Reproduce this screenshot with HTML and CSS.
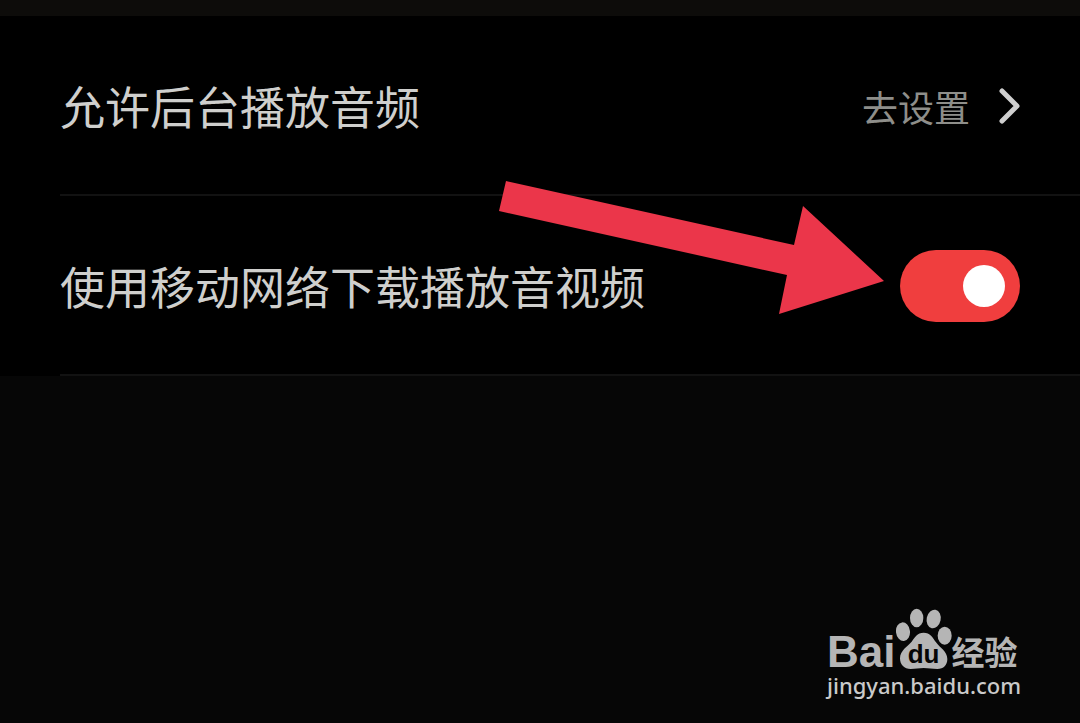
FILE: index.html
```
<!DOCTYPE html>
<html lang="zh-CN">
<head>
  <meta charset="UTF-8">
  <title>播放设置</title>
  <link rel="stylesheet" href="styles.css">
</head>
<body>

  <div class="settings">
    <div class="row">
      <span class="row-title">允许后台播放音频</span>
      <a class="row-link" href="#">
        去设置
        <svg class="chevron" width="22" height="36" viewBox="0 0 22 36" aria-hidden="true">
          <path d="M4 3L19 18L4 33" />
        </svg>
      </a>
    </div>

    <div class="row">
      <label class="row-title" for="mobile-data">使用移动网络下载播放音视频</label>
      <input class="switch" type="checkbox" id="mobile-data" checked>
    </div>
  </div>

  <svg class="arrow" width="386" height="136" viewBox="0 0 386 136" aria-hidden="true">
    <path d="M7 1L295 65L304 26L385 101L280 134L288 95L0 31Z" />
  </svg>

  <div class="watermark">
    <div class="logo">
      <span class="logo-bai">Bai</span>
      <span class="logo-paw">
        <svg width="56" height="62" viewBox="254 54 168 186" aria-hidden="true">
          <ellipse cx="275" cy="125" rx="21" ry="28" transform="rotate(-6 275 125)" />
          <ellipse cx="316" cy="84" rx="20" ry="28" />
          <ellipse cx="367" cy="87" rx="21" ry="28" transform="rotate(12 367 87)" />
          <ellipse cx="400" cy="137" rx="21" ry="27" />
          <path d="M337 128C318 128 309 143 301 155C291 168 266 180 266 205C266 225 279 237 298 237C313 237 322 234 337 234C352 234 362 237 378 237C397 237 408 225 408 207C408 184 386 174 374 157C365 143 356 128 337 128Z" />
        </svg>
        <span class="logo-du">du</span>
      </span>
      <span class="logo-name">经验</span>
    </div>
    <div class="site">jingyan.baidu.com</div>
  </div>

</body>
</html>
```
FILE: styles.css
```
body {
  margin: 0;
  min-height: 100vh;
  position: relative;
  overflow: hidden;
  background-color: #060606;
  color: #cfcfcd;
  font-family: "Noto Sans CJK SC", sans-serif;
}
.settings {
  border-top: 16px solid #0d0c0a;
  background-color: #000;
}
.row {
  display: flex;
  align-items: center;
  justify-content: space-between;
  box-sizing: border-box;
  height: 180px;
  margin-left: 60px;
  padding-top: 2px;
  padding-right: 60px;
  border-bottom: 2px solid #121212;
}
.row-title {
  font-size: 45px;
  line-height: 60px;
  font-weight: 400;
}
.row-link {
  display: flex;
  align-items: center;
  gap: 28px;
  color: #8e8e8a;
  font-size: 36px;
  line-height: 48px;
  font-weight: 400;
  text-decoration: none;
}
.chevron {
  fill: none;
  stroke: #cfcfcf;
  stroke-width: 5;
  stroke-linecap: round;
  stroke-linejoin: round;
}
.switch {
  appearance: none;
  display: flex;
  align-items: center;
  justify-content: flex-end;
  box-sizing: border-box;
  width: 120px;
  height: 72px;
  margin: 0;
  padding: 0 15px;
  border-radius: 36px;
  background-color: #444;
  cursor: pointer;
}
.switch:checked {
  background-color: #f03e3e;
}
.switch::before {
  content: "";
  width: 42px;
  height: 42px;
  border-radius: 50%;
  background-color: #fff;
}
.switch:not(:checked) {
  justify-content: flex-start;
}
.arrow {
  position: absolute;
  top: 180px;
  right: 195px;
  fill: #eb364a;
}
.watermark {
  position: absolute;
  right: 59px;
  bottom: 23px;
  color: #b5b5b5;
}
.logo {
  display: flex;
  align-items: flex-end;
  font-weight: bold;
}
.logo-bai {
  font-family: "Liberation Sans", sans-serif;
  font-size: 44px;
  line-height: 36px;
}
.logo-paw {
  position: relative;
}
.logo-paw svg {
  display: block;
  fill: #b5b5b5;
}
.logo-du {
  position: absolute;
  left: 0;
  right: 0;
  bottom: 0;
  color: #060606;
  font-family: "Liberation Sans", sans-serif;
  font-size: 26px;
  line-height: 32px;
  text-align: center;
}
.logo-name {
  font-size: 33px;
  line-height: 38px;
}
.site {
  color: #cacaca;
  font-family: "Noto Sans", sans-serif;
  font-size: 22px;
  line-height: 30px;
  font-weight: 500;
}
```
